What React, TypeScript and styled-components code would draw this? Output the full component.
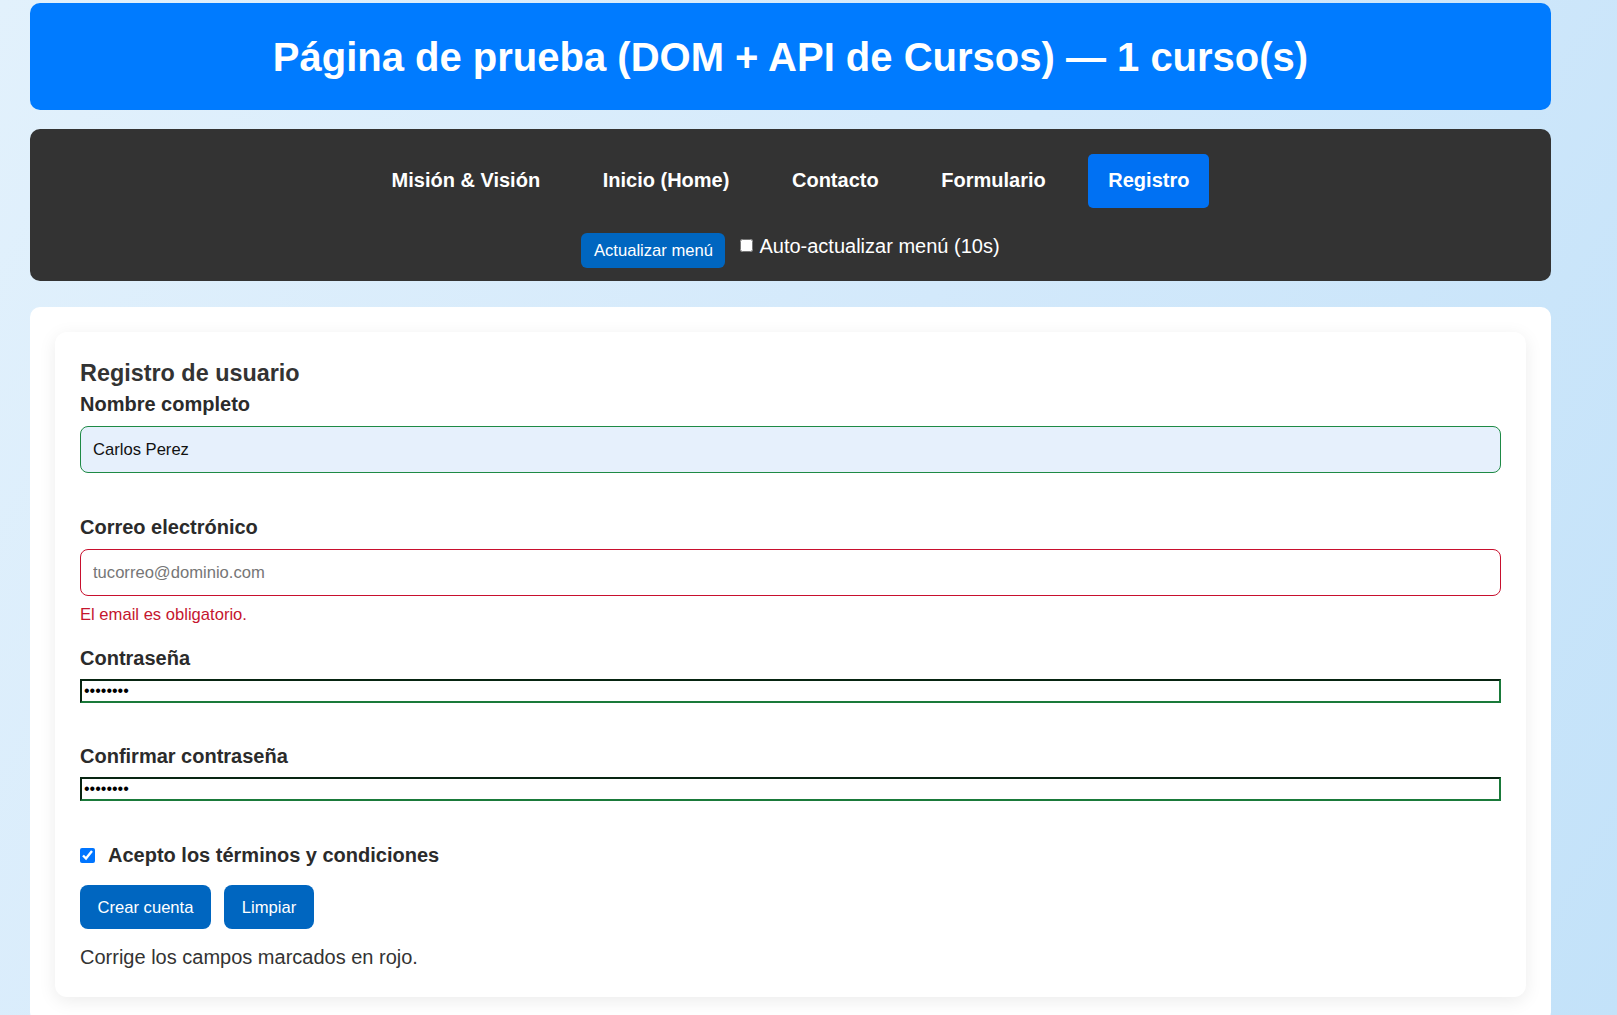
import React from 'react';
import styled, { createGlobalStyle } from 'styled-components';

const GlobalStyle = createGlobalStyle`
  html, body {
    margin: 0;
    padding: 0;
  }
  body {
    min-height: 100vh;
    background: linear-gradient(120deg, #e2f1fc 0%, #d3e9fb 50%, #c3e2f9 100%);
    font-family: "Liberation Sans", Arial, sans-serif;
    font-size: 20px;
    color: #333;
  }
`;

const Page = styled.div`
  width: 1521px;
  padding: 3px 0 0 30px;
`;

const Header = styled.header`
  background: #007bff;
  border-radius: 10px;
  padding: 30.5px 20px 30.5px;
  text-align: center;
`;

const Title = styled.h1`
  margin: 0;
  font-size: 40px;
  font-weight: 700;
  line-height: 46px;
  color: #fff;
`;

const NavBar = styled.nav`
  margin-top: 19px;
  background: #333;
  border-radius: 10px;
  padding: 25px 0 13px;
`;

const NavList = styled.ul`
  list-style: none;
  margin: 0;
  padding: 0;
  display: flex;
  justify-content: center;
  gap: 22.6px;
`;

const NavLink = styled.a<{ $active?: boolean }>`
  display: block;
  padding: 15px 20px 15.5px;
  border-radius: 5px;
  font-size: 20px;
  line-height: 23px;
  font-weight: 700;
  color: #fff;
  text-decoration: none;
  background: ${(p) => (p.$active ? '#0071f3' : 'transparent')};
`;

const NavTools = styled.div`
  margin-top: 25px;
  display: flex;
  justify-content: center;
  align-items: flex-start;
`;

const SmallButton = styled.button`
  font-family: "Liberation Sans", Arial, sans-serif;
  font-size: 16.6px;
  line-height: 19px;
  padding: 8px 12.5px;
  border: none;
  border-radius: 6px;
  background: #0066c0;
  color: #fff;
  margin-right: 15px;
`;

const AutoLabel = styled.label`
  display: inline-flex;
  align-items: flex-start;
  margin-top: 2px;
  color: #fff;
  font-size: 20px;
  line-height: 23px;

  input {
    margin: 4px 6px 0 0;
    width: 13px;
    height: 13px;
  }
`;

const OuterCard = styled.main`
  margin-top: 26px;
  background: #fff;
  border-radius: 10px;
  padding: 25px;
`;

const FormCard = styled.section`
  background: #fff;
  border-radius: 12px;
  padding: 25px 25px 28px;
  box-shadow: 0 4px 18px rgba(0, 0, 0, 0.08);
`;

const FormTitle = styled.h3`
  margin: 3px 0 6px;
  font-size: 23.4px;
  line-height: 27px;
  font-weight: 700;
  color: #333;
`;

const Field = styled.div`
  margin-bottom: 22.5px;
`;

const Label = styled.label<{ $tight?: boolean }>`
  display: block;
  font-size: 20px;
  line-height: 23px;
  font-weight: 700;
  color: #2b2b2b;
  margin-bottom: ${(p) => (p.$tight ? '9px' : '10.5px')};
`;

const TextInput = styled.input<{ $state: 'ok' | 'error'; $filled?: boolean }>`
  display: block;
  box-sizing: border-box;
  width: 100%;
  height: 47px;
  padding: 12px;
  font-family: "Liberation Sans", Arial, sans-serif;
  font-size: 16.6px;
  color: #111;
  border-radius: 8px;
  border: 1px solid ${(p) => (p.$state === 'ok' ? '#1e8a45' : '#c8102e')};
  background: ${(p) => (p.$filled ? '#e6f0fc' : '#fff')};
  outline: none;

  &::placeholder {
    color: #767676;
  }
`;

const PasswordInput = styled.input`
  display: block;
  box-sizing: border-box;
  width: 100%;
  height: 24px;
  padding: 0 2px;
  font-family: "Liberation Sans", Arial, sans-serif;
  font-size: 16px;
  border: 2px inset #1a7a3a;
  background: #fff;
  outline: none;
`;

const ErrorText = styled.small`
  display: block;
  margin-top: 9px;
  min-height: 11px;
  font-size: 16.6px;
  line-height: 19px;
  color: #c5162e;
`;

const TermsRow = styled.label`
  display: flex;
  align-items: center;
  font-size: 20px;
  line-height: 23px;
  font-weight: 700;
  color: #2b2b2b;

  input {
    margin: 0 13px 0 0;
    width: 15px;
    height: 15px;
  }
`;

const Actions = styled.div`
  margin-top: 18.5px;
  display: flex;
  gap: 13.4px;
`;

const PrimaryButton = styled.button`
  font-family: "Liberation Sans", Arial, sans-serif;
  font-size: 16.6px;
  line-height: 19px;
  padding: 12.5px 17.5px;
  border: none;
  border-radius: 8px;
  background: #0066c0;
  color: #fff;
`;

const StatusText = styled.p`
  margin: 16.5px 0 0;
  font-size: 20px;
  line-height: 23px;
  color: #333;
`;

const navItems = [
  { label: 'Misión & Visión' },
  { label: 'Inicio (Home)' },
  { label: 'Contacto' },
  { label: 'Formulario' },
  { label: 'Registro', active: true },
];

const App: React.FC = () => {
  return (
    <>
      <GlobalStyle />
      <Page>
        <Header>
          <Title>Página de prueba (DOM + API de Cursos) — 1 curso(s)</Title>
        </Header>

        <NavBar>
          <NavList>
            {navItems.map((item) => (
              <li key={item.label}>
                <NavLink href="#" $active={item.active}>
                  {item.label}
                </NavLink>
              </li>
            ))}
          </NavList>
          <NavTools>
            <SmallButton type="button">Actualizar menú</SmallButton>
            <AutoLabel>
              <input type="checkbox" />
              Auto-actualizar menú (10s)
            </AutoLabel>
          </NavTools>
        </NavBar>

        <OuterCard>
          <FormCard>
            <FormTitle>Registro de usuario</FormTitle>

            <Field>
              <Label htmlFor="nombre">Nombre completo</Label>
              <TextInput id="nombre" $state="ok" $filled defaultValue="Carlos Perez" />
              <ErrorText />
            </Field>

            <Field>
              <Label htmlFor="correo">Correo electrónico</Label>
              <TextInput id="correo" $state="error" placeholder="tucorreo@dominio.com" />
              <ErrorText>El email es obligatorio.</ErrorText>
            </Field>

            <Field>
              <Label htmlFor="pass" $tight>Contraseña</Label>
              <PasswordInput id="pass" type="password" defaultValue="12345678" />
              <ErrorText />
            </Field>

            <Field>
              <Label htmlFor="pass2" $tight>Confirmar contraseña</Label>
              <PasswordInput id="pass2" type="password" defaultValue="12345678" />
              <ErrorText />
            </Field>

            <TermsRow>
              <input type="checkbox" defaultChecked />
              Acepto los términos y condiciones
            </TermsRow>

            <Actions>
              <PrimaryButton type="button">Crear cuenta</PrimaryButton>
              <PrimaryButton type="button">Limpiar</PrimaryButton>
            </Actions>

            <StatusText>Corrige los campos marcados en rojo.</StatusText>
          </FormCard>
        </OuterCard>
      </Page>
    </>
  );
};

export default App;
